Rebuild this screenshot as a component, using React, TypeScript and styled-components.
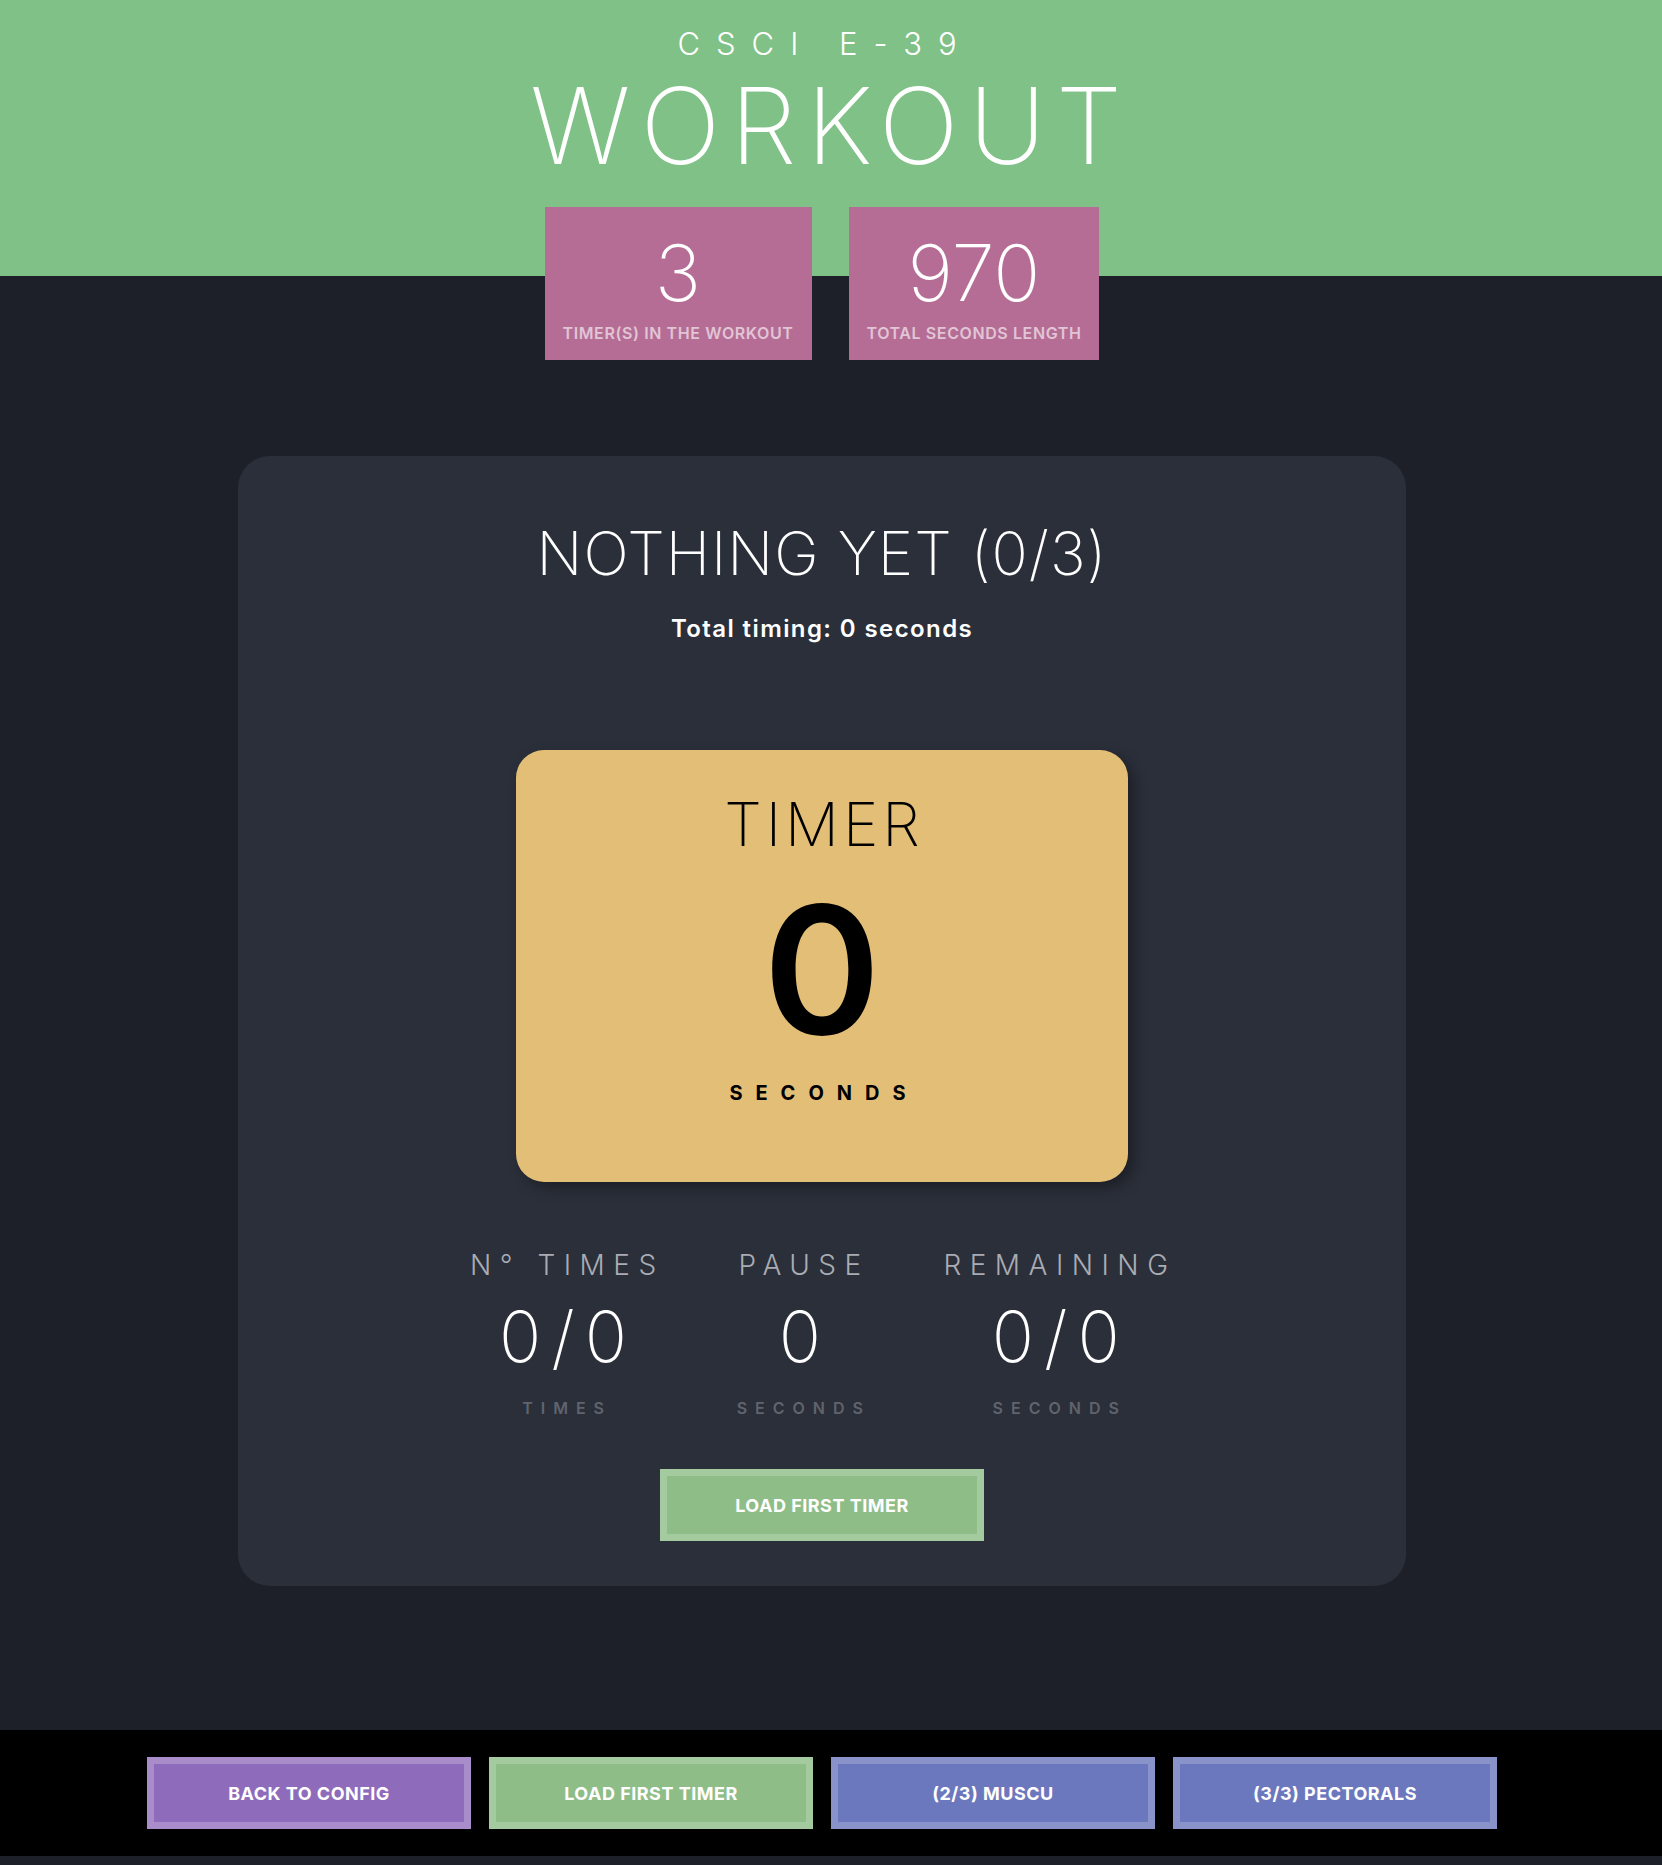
import React from "react";
import styled, { createGlobalStyle } from "styled-components";

const GlobalStyle = createGlobalStyle`
  html, body {
    margin: 0;
    padding: 0;
    background: #1e2029;
  }

  body {
    font-family: Inter, "Open Sans", sans-serif;
    color: #ffffff;
  }
`;

const Header = styled.header`
  display: flow-root;
  background: #7fc186;
  padding-top: 28px;
  text-align: center;
`;

const Course = styled.div`
  font-size: 31px;
  line-height: 1;
  font-weight: 300;
  letter-spacing: 16px;
  padding-right: 12px;
`;

const Title = styled.h1`
  margin: 14px 0 0;
  font-size: 106px;
  line-height: 1;
  font-weight: 200;
  letter-spacing: 10px;
`;

const Summary = styled.div`
  display: flex;
  justify-content: center;
  gap: 37px;
  padding-right: 18px;
  margin: 28px 0 -84px;
`;

const SummaryBox = styled.div`
  background: #b56d96;
  height: 153px;
  box-sizing: border-box;
  padding: 27px 18px 0;
  text-align: center;
`;

const SummaryValue = styled.div`
  font-size: 78px;
  line-height: 1;
  font-weight: 200;
`;

const SummaryLabel = styled.div`
  margin-top: 13px;
  font-size: 16px;
  line-height: 1;
  font-weight: 600;
  color: #e1c5d5;
  text-transform: uppercase;
  letter-spacing: 0.6px;
`;

const Main = styled.main`
  padding: 180px 18px 144px 0;
`;

const Card = styled.section`
  width: 1168px;
  margin: 0 auto;
  box-sizing: border-box;
  background: #2b2f3a;
  border-radius: 32px;
  padding: 67px 0 45px;
  display: flex;
  flex-direction: column;
  align-items: center;
`;

const CardTitle = styled.h2`
  margin: 0;
  font-size: 60px;
  line-height: 1;
  font-weight: 200;
  letter-spacing: 1px;
`;

const Timing = styled.p`
  margin: 34px 0 0;
  font-size: 24px;
  line-height: 1;
  font-weight: 600;
  letter-spacing: 1.4px;
`;

const TimerCard = styled.div`
  width: 612px;
  height: 432px;
  box-sizing: border-box;
  margin-top: 109px;
  padding-top: 44px;
  background: #e3be77;
  border-radius: 28px;
  box-shadow: 6px 6px 14px rgba(0, 0, 0, 0.35);
  color: #000000;
  display: flex;
  flex-direction: column;
  align-items: center;
`;

const TimerTitle = styled.div`
  font-size: 60px;
  line-height: 1;
  font-weight: 200;
  letter-spacing: 4px;
  padding-left: 4px;
`;

const TimerValue = styled.div`
  margin-top: 27px;
  font-size: 178px;
  line-height: 1;
  font-weight: 600;
`;

const TimerUnit = styled.div`
  margin-top: 24px;
  padding-left: 4px;
  font-size: 20px;
  line-height: 1;
  font-weight: 700;
  letter-spacing: 13px;
`;

const Counters = styled.div`
  display: flex;
  justify-content: center;
  gap: 64px;
  margin-top: 69px;
  padding-right: 6px;
`;

const Counter = styled.div`
  display: flex;
  flex-direction: column;
  align-items: center;
`;

const CounterLabel = styled.div`
  font-size: 28px;
  line-height: 1;
  font-weight: 300;
  color: #a9acb3;
  letter-spacing: 8.5px;
  padding-left: 8.5px;
`;

const CounterValue = styled.div`
  margin-top: 23px;
  font-size: 70px;
  line-height: 1;
  font-weight: 200;
  letter-spacing: 10px;
  padding-left: 10px;
`;

const CounterUnit = styled.div`
  margin-top: 28px;
  font-size: 16px;
  line-height: 1;
  font-weight: 600;
  color: #5f646e;
  letter-spacing: 8px;
  padding-left: 8px;
`;

const palette = {
  green: { bg: "#8fbd88", border: "#a4cb9f" },
  purple: { bg: "#8f6bbb", border: "#a98dcb" },
  blue: { bg: "#6c78bd", border: "#8993c9" },
};

type Tone = keyof typeof palette;

const Button = styled.button<{ $tone: Tone }>`
  width: 324px;
  height: 72px;
  box-sizing: border-box;
  border: 7px solid ${(p) => palette[p.$tone].border};
  background: ${(p) => palette[p.$tone].bg};
  color: #ffffff;
  font-family: inherit;
  font-size: 18px;
  font-weight: 700;
  letter-spacing: 0.5px;
  text-transform: uppercase;
  cursor: pointer;
`;

const CardButton = styled(Button)`
  margin-top: 53px;
`;

const Footer = styled.footer`
  background: #000000;
  padding: 27px 18px 27px 0;
  margin-bottom: 8px;
  display: flex;
  justify-content: center;
  gap: 18px;
`;

const counters = [
  { label: "N° Times", value: "0/0", unit: "Times" },
  { label: "Pause", value: "0", unit: "Seconds" },
  { label: "Remaining", value: "0/0", unit: "Seconds" },
];

const footerButtons: { label: string; tone: Tone }[] = [
  { label: "Back to config", tone: "purple" },
  { label: "Load first timer", tone: "green" },
  { label: "(2/3) Muscu", tone: "blue" },
  { label: "(3/3) Pectorals", tone: "blue" },
];

const App = () => (
  <>
    <GlobalStyle />
    <Header>
      <Course>CSCI E-39</Course>
      <Title>WORKOUT</Title>
      <Summary>
        <SummaryBox>
          <SummaryValue>3</SummaryValue>
          <SummaryLabel>Timer(s) in the workout</SummaryLabel>
        </SummaryBox>
        <SummaryBox>
          <SummaryValue>970</SummaryValue>
          <SummaryLabel>Total seconds length</SummaryLabel>
        </SummaryBox>
      </Summary>
    </Header>

    <Main>
      <Card>
        <CardTitle>NOTHING YET (0/3)</CardTitle>
        <Timing>Total timing: 0 seconds</Timing>

        <TimerCard>
          <TimerTitle>TIMER</TimerTitle>
          <TimerValue>0</TimerValue>
          <TimerUnit>SECONDS</TimerUnit>
        </TimerCard>

        <Counters>
          {counters.map((c) => (
            <Counter key={c.label}>
              <CounterLabel>{c.label.toUpperCase()}</CounterLabel>
              <CounterValue>{c.value}</CounterValue>
              <CounterUnit>{c.unit.toUpperCase()}</CounterUnit>
            </Counter>
          ))}
        </Counters>

        <CardButton $tone="green">Load first timer</CardButton>
      </Card>
    </Main>

    <Footer>
      {footerButtons.map((b) => (
        <Button key={b.label} $tone={b.tone}>
          {b.label}
        </Button>
      ))}
    </Footer>
  </>
);

export default App;
